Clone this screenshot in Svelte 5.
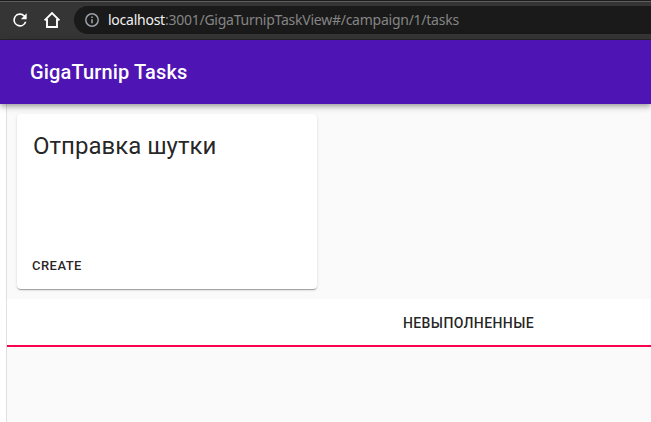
<script>
  const host = 'localhost';
  const path = ':3001/GigaTurnipTaskView#/campaign/1/tasks';
</script>

<div class="screen">
  <div class="browser">
    <svg class="reload" viewBox="0 0 24 24" width="20" height="20" aria-hidden="true">
      <path fill="#fff" d="M17.65 6.35A8 8 0 1 0 19.73 14h-2.08A6 6 0 1 1 12 6c1.66 0 3.14.69 4.22 1.78L13 11h7V4z" />
    </svg>
    <svg class="home" viewBox="0 0 18 18" width="18" height="18" aria-hidden="true">
      <path fill="none" stroke="#fff" stroke-width="1.9" d="M1.6 9.4 9 2l7.4 7.4M4 8v8h10V8" />
    </svg>
    <div class="address">
      <svg viewBox="0 0 16 16" width="16" height="16" aria-hidden="true">
        <circle cx="8" cy="8" r="6.2" fill="none" stroke="#9aa0a6" stroke-width="1.5" />
        <path stroke="#9aa0a6" stroke-width="1.6" d="M8 7.2v4M8 4.5v1.6" />
      </svg>
      <span class="url"><span class="host">{host}</span>{path}</span>
    </div>
  </div>
  <header>
    <h1>GigaTurnip Tasks</h1>
  </header>
  <main>
    <article class="card">
      <h2>Отправка шутки</h2>
      <button class="create">Create</button>
    </article>
    <div class="tabs">
      <button class="tab">Невыполненные</button>
    </div>
  </main>
</div>

<style>
  :global(body) {
    overflow: hidden;
  }
  .screen {
    width: 651px;
    height: 422px;
    overflow: hidden;
    display: flex;
    flex-direction: column;
    background: #fff;
    font-family: Roboto, sans-serif;
    color: rgba(0, 0, 0, 0.87);
  }
  .browser {
    box-sizing: border-box;
    flex: none;
    height: 40px;
    display: flex;
    align-items: center;
    padding-left: 10px;
    background: #353535;
    border-bottom: 1px solid #272727;
    box-shadow: inset 0 1px #1c1c1c, inset 0 2px #5e5e5e;
  }
  .reload {
    margin-right: 13px;
  }
  .home {
    margin-right: 13px;
  }
  .address {
    flex: 1;
    height: 28px;
    display: flex;
    align-items: center;
    padding-left: 10px;
    border-radius: 14px 0 0 14px;
    background: #1a1a1a;
  }
  .url {
    margin-left: 8px;
    font-family: "Noto Sans", sans-serif;
    font-size: 14px;
    line-height: 20px;
    letter-spacing: -0.25px;
    white-space: nowrap;
    color: #858585;
  }
  .host {
    color: #f1f1f1;
  }
  header {
    flex: none;
    position: relative;
    height: 64px;
    display: flex;
    align-items: center;
    padding-left: 30px;
    background: #4f14b4;
    color: #fff;
    box-shadow: 0 2px 4px -1px rgba(0, 0, 0, 0.2), 0 4px 5px rgba(0, 0, 0, 0.14), 0 1px 10px rgba(0, 0, 0, 0.12);
  }
  h1 {
    margin: 0;
    font-size: 20px;
    font-weight: 500;
    line-height: 32px;
    letter-spacing: 0.15px;
  }
  main {
    flex: 1;
    margin-left: 6px;
    border-left: 1px solid #e0e0e0;
    background: #fafafa;
  }
  .card {
    box-sizing: border-box;
    width: 300px;
    height: 175px;
    margin: 10px;
    padding: 16px 8px 8px;
    display: flex;
    flex-direction: column;
    align-items: flex-start;
    justify-content: space-between;
    background: #fff;
    border-radius: 4px;
    box-shadow: 0 2px 1px -1px rgba(0, 0, 0, 0.2), 0 1px 1px rgba(0, 0, 0, 0.14), 0 1px 3px rgba(0, 0, 0, 0.12);
  }
  h2 {
    margin: 0 8px;
    font-size: 24px;
    font-weight: 400;
    line-height: 32px;
  }
  button {
    margin: 0;
    border: 0;
    background: none;
    color: inherit;
    font-family: inherit;
    font-weight: 500;
    text-transform: uppercase;
  }
  .create {
    padding: 4px 7px;
    font-size: 13px;
    line-height: 23px;
    letter-spacing: 0.46px;
  }
  .tabs {
    box-sizing: border-box;
    height: 48px;
    display: flex;
    background: #fff;
    border-bottom: 2px solid #fc004e;
  }
  .tab {
    width: 923px;
    flex: none;
    padding: 2px 0 0;
    font-size: 14px;
    letter-spacing: 0.4px;
  }
</style>
